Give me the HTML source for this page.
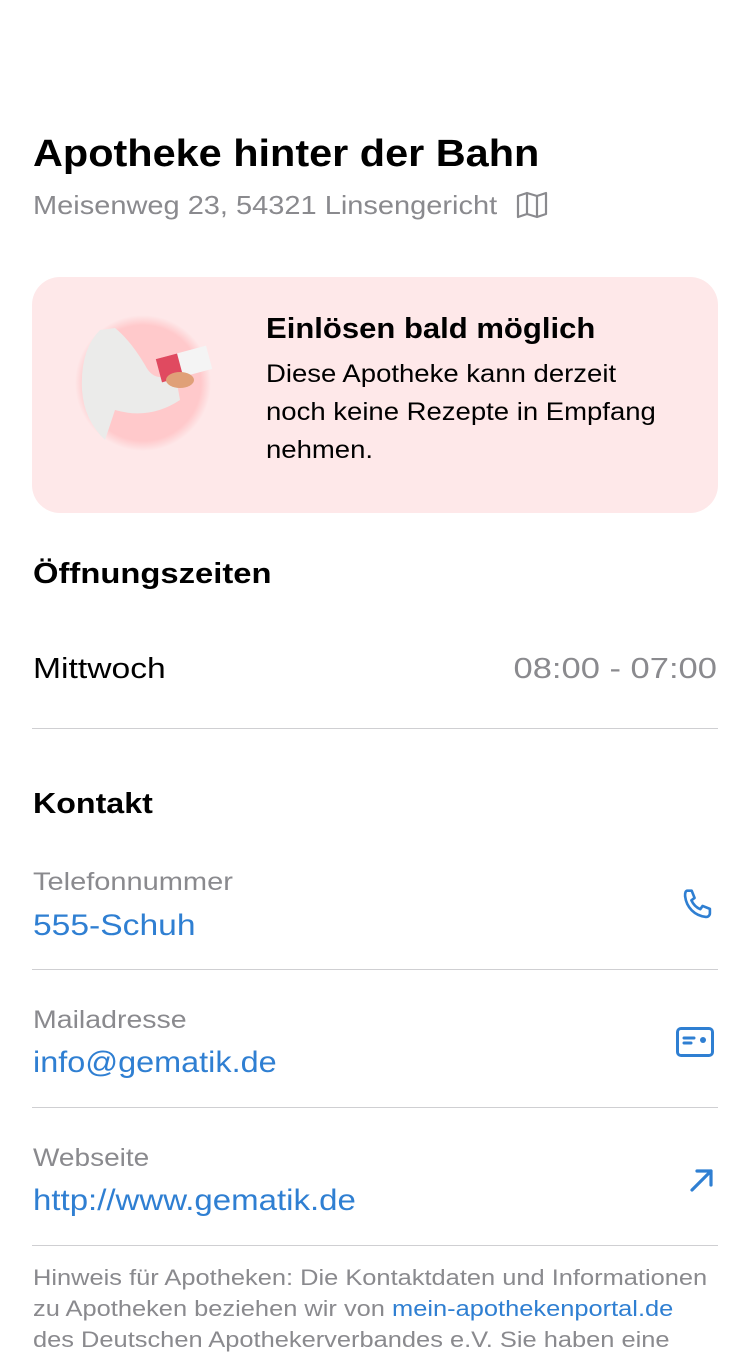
<!DOCTYPE html><html><head><meta charset="utf-8"><style>
*{margin:0;padding:0;box-sizing:border-box}
body{width:750px;height:1334px;overflow:hidden;background:#fff;font-family:"Liberation Sans",sans-serif;color:#000;position:relative}
.a{position:absolute;white-space:nowrap;transform-origin:0 0}
.g{color:#8a8a8e}.b{color:#2f7fd2}
.hr{position:absolute;left:32px;width:686px;height:1px;background:#cfcfd2}
</style></head><body>
<div class="a" style="left:33px;top:133px;font-size:38px;font-weight:bold;transform:scaleX(1.09)">Apotheke hinter der Bahn</div>
<div class="a g" style="left:33px;top:190px;font-size:26px;transform:scaleX(1.115)">Meisenweg 23, 54321 Linsengericht</div>
<svg class="a" style="left:516px;top:191px" width="32" height="28" viewBox="0 0 32 28" fill="none" stroke="#8a8a8e" stroke-width="2.2" stroke-linejoin="round"><path d="M2 5l9-3 10 3 9-3v21l-9 3-10-3-9 3z M11 2v21 M21 5v21"/></svg>
<div class="a" style="left:32px;top:277px;width:686px;height:236px;border-radius:28px;background:#fee8e9"></div>
<svg class="a" style="left:70px;top:310px" width="150" height="150" viewBox="0 0 150 150">
<defs><radialGradient id="r"><stop offset="0.85" stop-color="#ffc9cb"/><stop offset="1" stop-color="#fee8e9"/></radialGradient></defs>
<circle cx="73" cy="73" r="68" fill="url(#r)"/>
<path d="M30 20 Q10 40 12 80 Q14 110 35 130 L45 100 Q80 110 110 90 L105 62 Q85 75 75 55 Q60 30 45 18z" fill="#ebebea"/>
<rect x="88" y="42" width="52" height="24" fill="#f4f4f4" transform="rotate(-15 114 54)"/>
<rect x="88" y="42" width="22" height="24" fill="#e04a60" transform="rotate(-15 114 54)"/>
<ellipse cx="110" cy="70" rx="14" ry="8" fill="#e0a078"/>
</svg>
<div class="a" style="left:266px;top:313px;font-size:29px;font-weight:bold;transform:scaleX(1.07)">Einlösen bald möglich</div>
<div class="a" style="left:266px;top:355px;font-size:25px;line-height:38px;transform:scaleX(1.1)">Diese Apotheke kann derzeit<br>noch keine Rezepte in Empfang<br>nehmen.</div>
<div class="a" style="left:33px;top:558px;font-size:29px;font-weight:bold;transform:scaleX(1.13)">Öffnungszeiten</div>
<div class="a" style="left:33px;top:653px;font-size:29px;transform:scaleX(1.16)">Mittwoch</div>
<div class="a g" style="right:33px;top:653px;font-size:29px;transform:scaleX(1.19);transform-origin:100% 0">08:00 - 07:00</div>
<div class="hr" style="top:728px"></div>
<div class="a" style="left:33px;top:788px;font-size:29px;font-weight:bold;transform:scaleX(1.11)">Kontakt</div>
<div class="a g" style="left:33px;top:868px;font-size:25px;transform:scaleX(1.16)">Telefonnummer</div>
<div class="a b" style="left:33px;top:909px;font-size:30px;transform:scaleX(1.12)">555-Schuh</div>
<svg class="a" style="left:680px;top:887px" width="35" height="35" viewBox="0 0 24 24" fill="none" stroke="#2f7fd2" stroke-width="1.8" stroke-linejoin="round"><path d="M5 2.5l3 0 2 5-2.2 1.6c1.2 2.6 3.5 5 6.1 6.1L15.5 13l5 2v3c0 1.5-1.3 2.7-2.8 2.5C10 19.6 4.4 14 3.5 6.3 3.3 4 4 2.5 5 2.5z"/></svg>
<div class="hr" style="top:969px"></div>
<div class="a g" style="left:33px;top:1006px;font-size:25px;transform:scaleX(1.14)">Mailadresse</div>
<div class="a b" style="left:33px;top:1046px;font-size:30px;transform:scaleX(1.08)">info@gematik.de</div>
<svg class="a" style="left:675px;top:1026px" width="40" height="32" viewBox="0 0 40 32" fill="none" stroke="#2f7fd2" stroke-width="3"><rect x="2.5" y="2.5" width="35" height="27" rx="3.5"/><path d="M9 12h10M9 17h7" stroke-linecap="round"/><circle cx="28" cy="14" r="3" fill="#2f7fd2" stroke="none"/></svg>
<div class="hr" style="top:1107px"></div>
<div class="a g" style="left:33px;top:1144px;font-size:25px;transform:scaleX(1.12)">Webseite</div>
<div class="a b" style="left:33px;top:1184px;font-size:30px;transform:scaleX(1.1)">http://www.gematik.de</div>
<svg class="a" style="left:688px;top:1166px" width="28" height="28" viewBox="0 0 28 28" fill="none" stroke="#2f7fd2" stroke-width="3.2" stroke-linecap="round" stroke-linejoin="round"><path d="M4 24L23 5M9 5h14v14"/></svg>
<div class="hr" style="top:1245px"></div>
<div class="a g" style="left:33px;top:1262px;font-size:22.5px;line-height:31px;transform:scaleX(1.13)">Hinweis für Apotheken: Die Kontaktdaten und Informationen<br>zu Apotheken beziehen wir von <span class="b">mein-apothekenportal.de</span><br>des Deutschen Apothekerverbandes e.V. Sie haben eine</div>
</body></html>
